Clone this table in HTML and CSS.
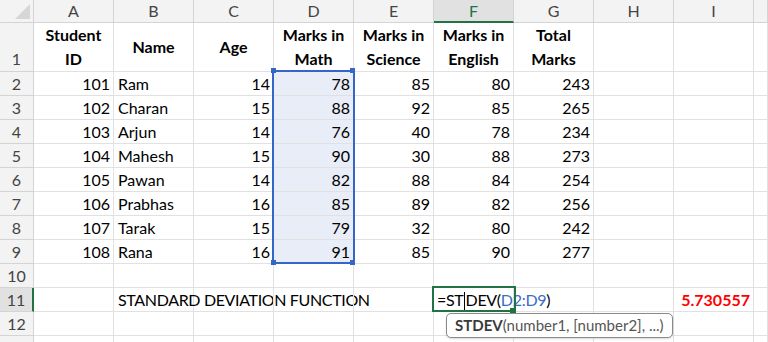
FILE: index.html
```html
<!DOCTYPE html>
<html lang="en">
<head>
    <meta charset="UTF-8">
    <title>Standard Deviation - Excel</title>
    <link rel="stylesheet" href="styles.css">
</head>
<body>
    <div class="sheet">
        <!-- column headers -->
        <div class="hd corner"><span class="corner-tri"></span></div>
        <div class="hd col">A</div>
        <div class="hd col">B</div>
        <div class="hd col">C</div>
        <div class="hd col">D</div>
        <div class="hd col">E</div>
        <div class="hd col active-col">F</div>
        <div class="hd col">G</div>
        <div class="hd col">H</div>
        <div class="hd col">I</div>
        <div class="hd col"></div>

        <!-- row 1 -->
        <div class="hd row row-tall">1</div>
        <div class="c th">Student<br>ID</div>
        <div class="c th">Name</div>
        <div class="c th">Age</div>
        <div class="c th">Marks in<br>Math</div>
        <div class="c th">Marks in<br>Science</div>
        <div class="c th">Marks in<br>English</div>
        <div class="c th">Total<br>Marks</div>
        <div class="c"></div>
        <div class="c"></div>
        <div class="c"></div>
    </div>

    <div class="overlay sel-box"></div>
    <span class="overlay handle h-tl"></span>
    <span class="overlay handle h-tr"></span>
    <span class="overlay handle h-bl"></span>
    <span class="overlay handle h-br"></span>
    <div class="overlay active-box"></div>
    <span class="overlay fill-handle"></span>
    <div class="overlay tip"><b>STDEV</b>(number1, [number2], ...)</div>

    <script>
        const students = [
            [101, 'Ram', 14, 78, 85, 80, 243],
            [102, 'Charan', 15, 88, 92, 85, 265],
            [103, 'Arjun', 14, 76, 40, 78, 234],
            [104, 'Mahesh', 15, 90, 30, 88, 273],
            [105, 'Pawan', 14, 82, 88, 84, 254],
            [106, 'Prabhas', 16, 85, 89, 82, 256],
            [107, 'Tarak', 15, 79, 32, 80, 242],
            [108, 'Rana', 16, 91, 85, 90, 277]
        ];

        const sheet = document.querySelector('.sheet');

        function addCell(cls, html) {
            const el = document.createElement('div');
            el.className = cls;
            el.innerHTML = html;
            sheet.appendChild(el);
        }

        students.forEach((s, i) => {
            addCell('hd row', i + 2);
            s.forEach((v, j) => {
                let cls = typeof v === 'number' ? 'c num' : 'c';
                if (j === 3) cls += ' picked';
                addCell(cls, v);
            });
            addCell('c', '');
            addCell('c', '');
            addCell('c', '');
        });

        // row 10 .. 13 (13 is only a sliver at the bottom edge)
        for (let r = 10; r <= 13; r++) {
            addCell(r === 11 ? 'hd row active-row' : 'hd row', r < 13 ? r : '');
            for (let j = 0; j < 10; j++) {
                let html = '';
                let cls = 'c';
                if (r === 11 && j === 1) { html = 'STANDARD DEVIATION FUNCTION'; cls += ' spill caps'; }
                if (r === 11 && j === 5) {
                    html = '=ST<span class="caret"></span>DEV(<span class="ref">D2:D9</span>)';
                    cls += ' spill formula';
                }
                if (r === 11 && j === 8) { html = '5.730557'; cls += ' num result'; }
                addCell(cls, html);
            }
        }
    </script>
</body>
</html>
```

FILE: styles.css
```css
* {
    margin: 0;
    padding: 0;
    box-sizing: border-box;
}

body {
    width: 768px;
    height: 342px;
    overflow: hidden;
    background: #fff;
    color: #000;
    font-family: Lato, "Liberation Sans", sans-serif;
    font-size: 16px;
    position: relative;
}

.sheet {
    display: grid;
    grid-template-columns: 34px repeat(9, 80px) 1fr;
    grid-template-rows: 23px 49px repeat(12, 24px);
}

.c {
    border-right: 1px solid #e1e1e1;
    border-bottom: 1px solid #e1e1e1;
    line-height: 23px;
    padding: 0 4px;
    white-space: nowrap;
}

.num {
    text-align: right;
    padding-right: 3px;
}

.th {
    font-weight: bold;
    text-align: center;
    line-height: 24px;
    display: flex;
    align-items: center;
    justify-content: center;
}

.picked {
    background: #e8edf8;
}

.spill {
    overflow: visible;
}

.caps {
    letter-spacing: -0.35px;
}

.formula {
    padding-left: 3px;
    letter-spacing: -0.3px;
}

.caret {
    display: inline-block;
    width: 1px;
    height: 18px;
    margin: 0 0.5px;
    vertical-align: -4px;
    background: #000;
}

.ref {
    color: #3a6cc6;
}

.result {
    color: #ff0000;
    font-weight: bold;
}

.hd {
    background: #f3f3f3;
    color: #444;
    text-align: center;
    border-right: 1px solid #d4d4d4;
    border-bottom: 1px solid #d4d4d4;
    line-height: 22px;
}

.row {
    line-height: 23px;
}

.row-tall {
    display: flex;
    align-items: flex-end;
    justify-content: center;
    padding-bottom: 1px;
}

.corner {
    position: relative;
}

.corner-tri {
    position: absolute;
    right: 3px;
    bottom: 3px;
    width: 0;
    height: 0;
    border-left: 15px solid transparent;
    border-bottom: 15px solid #d6d6d6;
}

.active-col {
    background: #e1e1e1;
    color: #217346;
    border-bottom: 2px solid #217346;
}

.active-row {
    background: #e1e1e1;
    border-right: 2px solid #217346;
}

.overlay {
    position: absolute;
    display: block;
}

.sel-box {
    left: 272px;
    top: 70px;
    width: 83px;
    height: 194px;
    border: 2px solid #3366c8;
}

.handle {
    width: 5px;
    height: 5px;
    background: #3366c8;
}

.h-tl { left: 271px; top: 68px; }
.h-tr { left: 350px; top: 68px; }
.h-bl { left: 271px; top: 260px; }
.h-br { left: 350px; top: 260px; }

.active-box {
    left: 432px;
    top: 286px;
    width: 84px;
    height: 26px;
    border: 2px solid #217346;
}

.fill-handle {
    left: 510px;
    top: 308px;
    width: 6px;
    height: 6px;
    background: #217346;
}

.tip {
    left: 446px;
    top: 313px;
    width: 227px;
    height: 25px;
    padding: 0 8px;
    background: #fff;
    border: 1px solid #8a8a8a;
    border-radius: 5px;
    box-shadow: 0 1px 2px rgba(0, 0, 0, 0.15);
    color: #555;
    font-size: 15px;
    line-height: 23px;
    white-space: nowrap;
}

.tip b {
    color: #3b3b3b;
}
```
